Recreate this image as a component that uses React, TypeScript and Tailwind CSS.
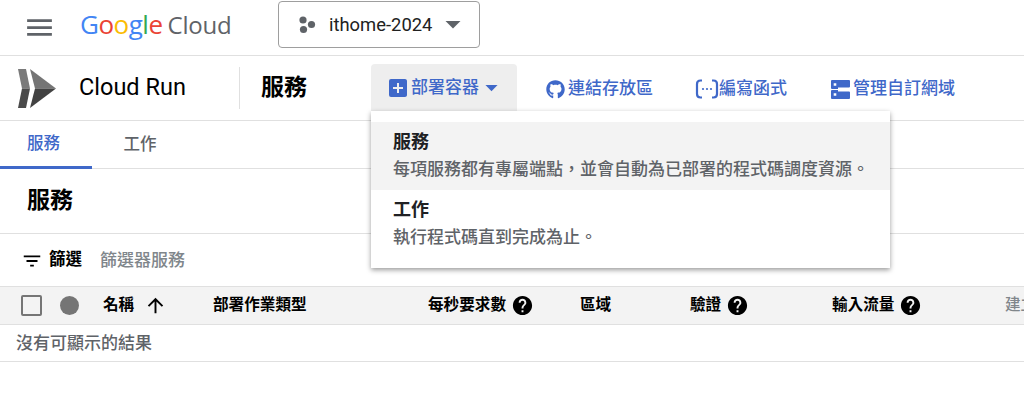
import { FaGithub } from "react-icons/fa";
import {
  MdAddBox,
  MdArrowDropDown,
  MdArrowUpward,
  MdFilterList,
  MdHelp,
  MdMenu,
} from "react-icons/md";

const FONT = "font-['Roboto','Noto_Sans_CJK_TC',sans-serif]";

const googleLetters = [
  { ch: "G", color: "text-[#4285f4]" },
  { ch: "o", color: "text-[#ea4335]" },
  { ch: "o", color: "text-[#fbbc04]" },
  { ch: "g", color: "text-[#4285f4]" },
  { ch: "l", color: "text-[#34a853]" },
  { ch: "e", color: "text-[#ea4335]" },
];

const RunLogo = () => (
  <svg width="38" height="39" viewBox="0 0 38 39" aria-hidden="true">
    <polygon points="0,0 8,0 12,19.5 4,19.5" fill="#7a7a7a" />
    <polygon points="0,39 8,39 12,19.5 4,19.5" fill="#4a4a4a" />
    <polygon points="12,0 38,19.5 17,19.5" fill="#757575" />
    <polygon points="12,39 38,19.5 17,19.5" fill="#424242" />
  </svg>
);

const FunctionIcon = () => (
  <svg width="24" height="20" viewBox="0 0 24 20" fill="none" aria-hidden="true">
    <path d="M7 1.500H5.500C3.500 1.500 2 3 2 5v10c0 2 1.500 3.500 3.500 3.500H7" stroke="#3f68c9" strokeWidth="2.2" />
    <path d="M17 1.500h1.500C20.500 1.500 22 3 22 5v10c0 2-1.500 3.500-3.500 3.500H17" stroke="#3f68c9" strokeWidth="2.2" />
    <circle cx="8" cy="10" r="1.1" fill="#3f68c9" />
    <circle cx="12" cy="10" r="1.1" fill="#3f68c9" />
    <circle cx="16" cy="10" r="1.1" fill="#3f68c9" />
  </svg>
);

const DomainIcon = () => (
  <svg width="19" height="19" viewBox="0 0 19 19" aria-hidden="true">
    <path
      fillRule="evenodd"
      d="M1 0h17a1 1 0 0 1 1 1v5.500a1 1 0 0 1-1 1H7V9H1a1 1 0 0 1-1-1V1a1 1 0 0 1 1-1Zm1.700 3.200v2.600h2.600V3.200Z"
      fill="#3f68c9"
    />
    <path
      fillRule="evenodd"
      d="M1 10h6v1.500h11a1 1 0 0 1 1 1V18a1 1 0 0 1-1 1H1a1 1 0 0 1-1-1v-7a1 1 0 0 1 1-1Zm1.700 3.200v2.600h2.600v-2.600Z"
      fill="#3f68c9"
    />
  </svg>
);

const ProjectIcon = () => (
  <svg width="18" height="18" viewBox="0 0 18 18" fill="#5f6368" aria-hidden="true">
    <circle cx="5" cy="4" r="3.600" />
    <circle cx="13.500" cy="8.500" r="3.600" />
    <circle cx="5.500" cy="13.500" r="3.600" />
  </svg>
);

const ActionLink = ({ icon, label, className }: { icon: React.ReactNode; label: string; className: string }) => (
  <div className={`mt-[2px] flex items-center text-[17px] font-medium text-[#3f68c9] ${className}`}>
    {icon}
    <span>{label}</span>
  </div>
);

const HeaderCell = ({ label, help, className }: { label: string; help?: boolean; className: string }) => (
  <div className={`flex shrink-0 items-center gap-[5px] ${className}`}>
    <span>{label}</span>
    {help && <MdHelp className="h-[23px] w-[23px] text-black" />}
  </div>
);

export default function App() {
  return (
    <div className={`relative h-[406px] w-[1024px] overflow-hidden bg-white ${FONT}`}>
      {/* Top bar */}
      <div className="flex h-[56px] items-center border-b border-[#e0e0e0]">
        <MdMenu className="ml-[23px] h-[33px] w-[33px] text-[#5f6368]" />
        <div className="mb-[6px] ml-[24px] flex w-[198px] items-baseline font-['Open_Sans',sans-serif] text-[26px] font-medium tracking-[-0.5px]">
          {googleLetters.map((l, i) => (
            <span key={i} className={l.color}>
              {l.ch}
            </span>
          ))}
          <span className="ml-[5px] text-[24px] font-normal tracking-[-0.2px] text-[#5f6368]">Cloud</span>
        </div>
        <div className="mb-[6px] flex h-[47px] w-[202px] items-center rounded-[4px] border border-[#9e9e9e] pl-[19px]">
          <ProjectIcon />
          <span className="ml-[13px] text-[18.4px] text-[#212121]">ithome-2024</span>
          <MdArrowDropDown className="mb-[2px] ml-[3px] h-[36px] w-[36px] text-[#5f6368]" />
        </div>
      </div>

      {/* Product bar */}
      <div className="flex h-[65px] items-center border-b border-[#e0e0e0]">
        <div className="ml-[18px]">
          <RunLogo />
        </div>
        <span className="ml-[23px] w-[160px] text-[23.5px] text-black">Cloud Run</span>
        <div className="h-[42px] w-px bg-[#e0e0e0]" />
        <span className="ml-[21px] w-[110px] text-[23px] font-bold text-black">服務</span>
        <div className="mt-[8px] flex h-[47px] w-[146px] items-center gap-[1px] self-start rounded-t-[4px] bg-[#eeeeee] pl-[15px] text-[17px] font-medium text-[#3f68c9]">
          <MdAddBox className="h-[24px] w-[24px]" />
          <span>部署容器</span>
          <MdArrowDropDown className="ml-[-3px] h-[29px] w-[29px]" />
        </div>
        <ActionLink className="ml-[29px] gap-[3px]" icon={<FaGithub className="h-[19px] w-[19px]" />} label="連結存放區" />
        <ActionLink className="ml-[42px] gap-0" icon={<FunctionIcon />} label="編寫函式" />
        <ActionLink className="ml-[44px] gap-[3px]" icon={<DomainIcon />} label="管理自訂網域" />
      </div>

      {/* Tabs */}
      <div className="flex h-[48px] border-b border-[#e0e0e0] text-[16.5px] font-medium">
        <div className="flex h-[48px] w-[92px] items-center justify-center border-b-[3px] border-[#3f68c9] pr-[5px] pt-[2px] text-[#3f68c9]">
          服務
        </div>
        <div className="flex h-[47px] w-[96px] items-center justify-center pt-[2px] text-[#5f6368]">工作</div>
      </div>

      {/* Title */}
      <div className="flex h-[65px] items-center border-b border-[#e0e0e0] pl-[27px] text-[23px] font-bold text-black">
        服務
      </div>

      {/* Filter */}
      <div className="flex h-[52px] items-center pl-[21px] pt-[1px] text-[16.5px] font-bold">
        <MdFilterList className="h-[22px] w-[22px] text-black" />
        <span className="ml-[6px] text-black">篩選</span>
        <span className="ml-[18px] text-[17px] font-medium text-[#80868b]">篩選器服務</span>
      </div>

      {/* Table */}
      <div className="flex h-[39px] items-center overflow-hidden border-y border-[#e0e0e0] bg-[#f3f3f3] text-[15.6px] font-bold text-black">
        <div className="ml-[21px] h-[21px] w-[21px] shrink-0 rounded-[2px] border-[2px] border-[#757575]" />
        <div className="ml-[18px] h-[19px] w-[19px] shrink-0 rounded-full bg-[#757575]" />
        <div className="ml-[24px] flex w-[110px] shrink-0 items-center gap-[10px]">
          <span>名稱</span>
          <MdArrowUpward className="h-[23px] w-[23px]" />
        </div>
        <HeaderCell label="部署作業類型" className="w-[215px]" />
        <HeaderCell label="每秒要求數" help className="w-[152px]" />
        <HeaderCell label="區域" className="w-[110px]" />
        <HeaderCell label="驗證" help className="w-[142px]" />
        <HeaderCell label="輸入流量" help className="w-[173px]" />
        <HeaderCell label="建立者" className="font-medium text-[#80868b]" />
      </div>
      <div className="flex h-[37px] items-center border-b border-[#e0e0e0] pl-[16px] pt-[1px] text-[17px] font-medium text-[#5f6368]">
        沒有可顯示的結果
      </div>

      {/* Deploy menu */}
      <div className="absolute left-[371px] top-[111px] h-[157px] w-[519px] bg-white py-[11px] shadow-[0_2px_5px_rgba(0,0,0,0.4)]">
        <div className="h-[68px] bg-[#f3f3f3] pl-[22px] pt-[7px]">
          <div className="text-[18px] leading-[26px] font-bold text-[#202124]">服務</div>
          <div className="text-[17px] leading-[28px] font-medium text-[#5f6368]">
            {"每項服務都有專屬端點\uFF0C並會自動為已部署的程式碼調度資源。"}
          </div>
        </div>
        <div className="h-[68px] pl-[22px] pt-[7px]">
          <div className="text-[18px] leading-[26px] font-bold text-[#202124]">工作</div>
          <div className="text-[17px] leading-[28px] font-medium text-[#5f6368]">
            執行程式碼直到完成為止。
          </div>
        </div>
      </div>
    </div>
  );
}
